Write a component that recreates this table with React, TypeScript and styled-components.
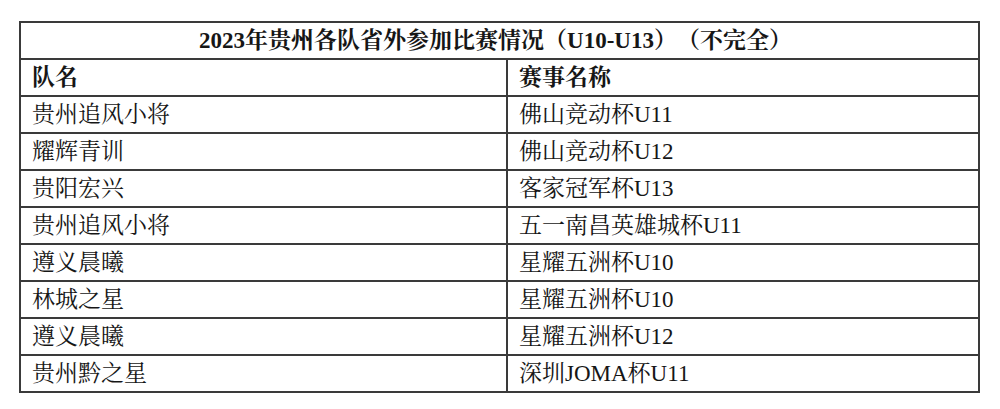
import { createGlobalStyle } from 'styled-components';
import styled from 'styled-components';

const GlobalStyle = createGlobalStyle`
  html, body {
    margin: 0;
    padding: 0;
    background: #ffffff;
  }
  body {
    font-family: "Liberation Serif", "Noto Serif CJK SC", "Noto Sans CJK SC", serif;
    color: #161616;
    text-spacing-trim: space-all;
  }
`;

const Page = styled.div`
  padding: 21px 20px 0 19px;
`;

const Table = styled.table`
  width: 961px;
  border-collapse: collapse;
  border: 2px solid #3a3a3a;
  table-layout: fixed;
`;

const Cell = styled.td<{ $head?: boolean }>`
  height: 35px;
  padding: 0 0 0 11px;
  border: 2px solid #3a3a3a;
  font-size: 23px;
  line-height: 1;
  font-weight: ${(p) => (p.$head ? 700 : 400)};
  vertical-align: middle;
  white-space: nowrap;
`;

const TitleCell = styled.th`
  height: 35px;
  padding: 0 8px 0 0;
  border: 2px solid #3a3a3a;
  font-size: 23px;
  line-height: 1;
  font-weight: 700;
  text-align: center;
  vertical-align: middle;
  white-space: nowrap;
`;

interface Entry {
  team: string;
  match: string;
}

const rows: Entry[] = [
  { team: '贵州追风小将', match: '佛山竞动杯U11' },
  { team: '耀辉青训', match: '佛山竞动杯U12' },
  { team: '贵阳宏兴', match: '客家冠军杯U13' },
  { team: '贵州追风小将', match: '五一南昌英雄城杯U11' },
  { team: '遵义晨曦', match: '星耀五洲杯U10' },
  { team: '林城之星', match: '星耀五洲杯U10' },
  { team: '遵义晨曦', match: '星耀五洲杯U12' },
  { team: '贵州黔之星', match: '深圳JOMA杯U11' },
];

export default function App() {
  return (
    <Page>
      <GlobalStyle />
      <Table>
        <colgroup>
          <col style={{ width: 487 }} />
          <col />
        </colgroup>
        <thead>
          <tr>
            <TitleCell colSpan={2}>2023年贵州各队省外参加比赛情况（U10-U13）（不完全）</TitleCell>
          </tr>
        </thead>
        <tbody>
          <tr>
            <Cell $head>队名</Cell>
            <Cell $head>赛事名称</Cell>
          </tr>
          {rows.map((r, i) => (
            <tr key={i}>
              <Cell>{r.team}</Cell>
              <Cell>{r.match}</Cell>
            </tr>
          ))}
        </tbody>
      </Table>
    </Page>
  );
}
